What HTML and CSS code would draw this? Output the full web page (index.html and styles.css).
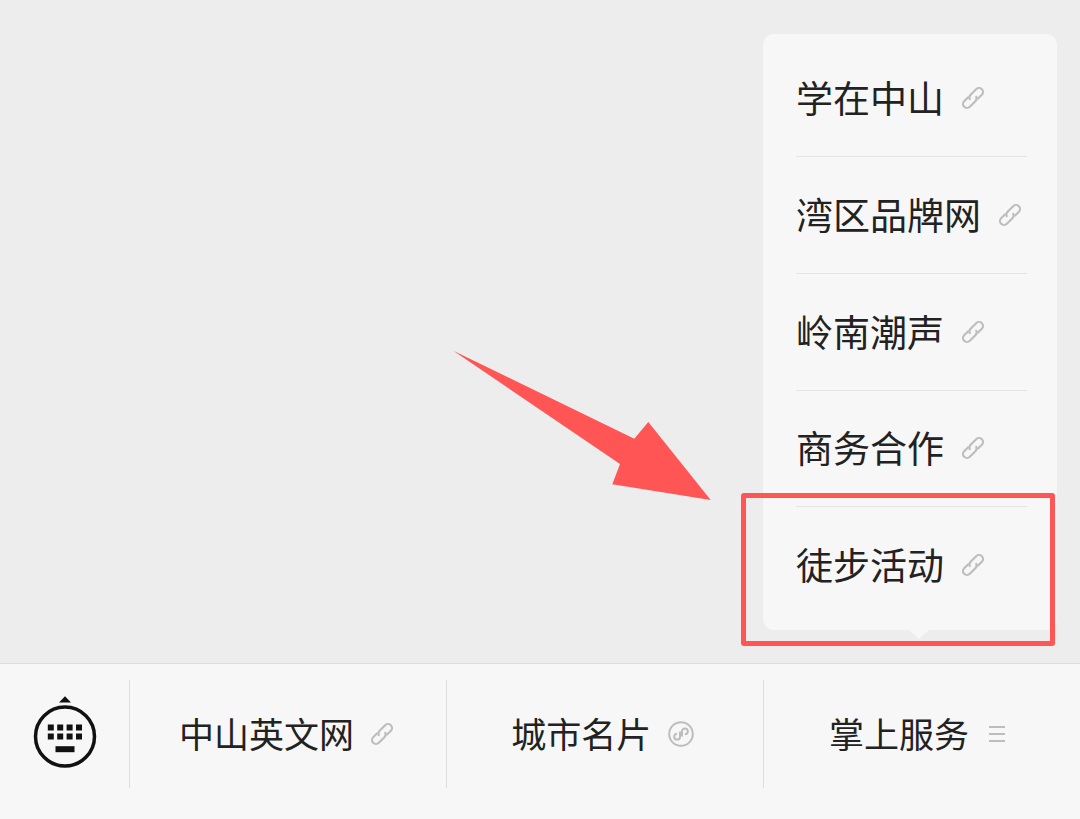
FILE: index.html
```html
<!DOCTYPE html>
<html lang="zh-CN">
<head>
<meta charset="utf-8">
<title>中山英文网</title>
<link rel="stylesheet" href="styles.css">
</head>
<body>
<svg class="defs" width="0" height="0" aria-hidden="true">
  <defs>
    <symbol id="link" viewBox="0 0 24 24">
      <g transform="rotate(-45 12 12)" fill="none" stroke="currentColor" stroke-width="1.700" stroke-linecap="round">
        <path d="M9.500 8.800H5.200a3.200 3.200 0 0 0 0 6.400h6.300a3.200 3.200 0 0 0 3-2"/>
        <path d="M14.500 15.200h4.300a3.200 3.200 0 0 0 0-6.400h-6.300a3.200 3.200 0 0 0-3 2"/>
      </g>
    </symbol>
  </defs>
</svg>
<div class="app">
  <main class="stage">
    <nav class="menu">
      <a class="menu-item"><span class="label">学在中山</span><svg class="ico-link"><use href="#link"/></svg></a>
      <a class="menu-item"><span class="label">湾区品牌网</span><svg class="ico-link"><use href="#link"/></svg></a>
      <a class="menu-item"><span class="label">岭南潮声</span><svg class="ico-link"><use href="#link"/></svg></a>
      <a class="menu-item"><span class="label">商务合作</span><svg class="ico-link"><use href="#link"/></svg></a>
      <a class="menu-item"><span class="label">徒步活动</span><svg class="ico-link"><use href="#link"/></svg></a>
      <i class="menu-tail"></i>
    </nav>
    <svg class="arrow" viewBox="0 0 260 152" aria-hidden="true">
      <path d="M1.300 .7 182.300 88.700 196.300 72 258.700 150 160.300 134.300 168 114Z"/>
    </svg>
    <div class="highlight"></div>
  </main>
  <footer class="bar">
    <button class="kbd" aria-label="键盘">
      <svg viewBox="0 0 66 76" width="66" height="76">
        <path class="kbd-tri" d="M33 1.200 39 7.500H27Z"/>
        <circle class="kbd-ring" cx="33" cy="41.500" r="29.500"/>
        <g class="kbd-keys">
          <rect x="15.800" y="29.500" width="6" height="6"/><rect x="25.200" y="29.500" width="6" height="6"/><rect x="34.600" y="29.500" width="6" height="6"/><rect x="44" y="29.500" width="6" height="6"/>
          <rect x="15.800" y="38.500" width="6" height="6"/><rect x="25.200" y="38.500" width="6" height="6"/><rect x="34.600" y="38.500" width="6" height="6"/><rect x="44" y="38.500" width="6" height="6"/>
          <rect x="23.500" y="51.200" width="19" height="6"/>
        </g>
      </svg>
    </button>
    <a class="tab"><span class="label">中山英文网</span><svg class="ico-link"><use href="#link"/></svg></a>
    <a class="tab tab-mini"><span class="label">城市名片</span>
      <svg class="ico-mini" viewBox="0 0 26 26">
        <circle cx="13" cy="13" r="11.800"/>
        <path d="M12 10.500v5.200a2.900 2.900 0 1 1-2.900-2.900M14 15.500v-5.200a2.900 2.900 0 1 1 2.900 2.900"/>
      </svg>
    </a>
    <a class="tab tab-last"><span class="label">掌上服务</span><i class="ico-list"></i></a>
  </footer>
</div>
</body>
</html>
```
FILE: styles.css
```css
* { box-sizing: border-box; }
html, body { margin: 0; height: 100%; }
body {
  font-family: "Noto Sans CJK SC", "Noto Sans", sans-serif;
  color: #222;
  background: #ededed;
  overflow: hidden;
}
.defs { position: absolute; }
.app { display: flex; flex-direction: column; height: 819px; }
.stage { position: relative; flex: 1; background: #ededed; }
.label { padding-bottom: 2px; }
.bar {
  display: flex;
  align-items: center;
  height: 156px;
  padding-bottom: 16px;
  background: #f7f7f7;
  border-top: 1px solid #dcdcdc;
}
.kbd {
  display: flex;
  justify-content: center;
  align-items: center;
  flex: none;
  width: 129px;
  height: 108px;
  padding: 0 0 2px;
  border: 0;
  background: none;
}
.kbd svg { display: block; }
.kbd-tri { fill: #111; }
.kbd-ring { fill: none; stroke: #111; stroke-width: 3.500; }
.kbd-keys { fill: #111; }
.tab {
  display: flex;
  justify-content: center;
  align-items: center;
  gap: 13px;
  flex: none;
  width: 317px;
  height: 108px;
  border-left: 1px solid #dedede;
  font-size: 35px;
  line-height: 48px;
  white-space: nowrap;
}
.tab-mini { gap: 16.500px; padding-right: 5px; }
.tab-last { gap: 14px; padding-right: 10px; }
.ico-link { width: 30px; height: 30px; color: #bdbdbd; flex: none; }
.ico-mini { width: 26px; height: 26px; flex: none; fill: none; stroke: #bdbdbd; stroke-width: 2; }
.ico-list {
  display: block;
  flex: none;
  width: 16px;
  height: 16px;
  margin-left: 6px;
  border-top: 2px solid #bdbdbd;
  border-bottom: 2px solid #bdbdbd;
  background: linear-gradient(#bdbdbd, #bdbdbd) center / 100% 2px no-repeat;
}
.menu {
  position: absolute;
  left: 763px;
  top: 34px;
  display: flex;
  flex-direction: column;
  width: 294px;
  height: 596px;
  padding: 6.500px 30px 7px 33px;
  background: #f7f7f7;
  border-radius: 11px;
}
.menu-item {
  display: flex;
  align-items: center;
  gap: 13.500px;
  flex: 1 1 0;
  font-size: 37px;
  line-height: 50px;
  white-space: nowrap;
  border-top: 1px solid #e4e4e4;
}
.menu-item:first-child { border-top: 0; }
.menu-tail {
  position: absolute;
  left: 145px;
  bottom: -9px;
  width: 22px;
  height: 10px;
  background: #f7f7f7;
  clip-path: polygon(0 0, 100% 0, 50% 100%);
}
.arrow {
  position: absolute;
  left: 452px;
  top: 350px;
  width: 260px;
  height: 152px;
  fill: #ff5555;
}
.highlight {
  position: absolute;
  left: 741px;
  top: 493px;
  width: 314px;
  height: 153px;
  border: 5px solid #ff5555;
  border-radius: 3px;
}
```
